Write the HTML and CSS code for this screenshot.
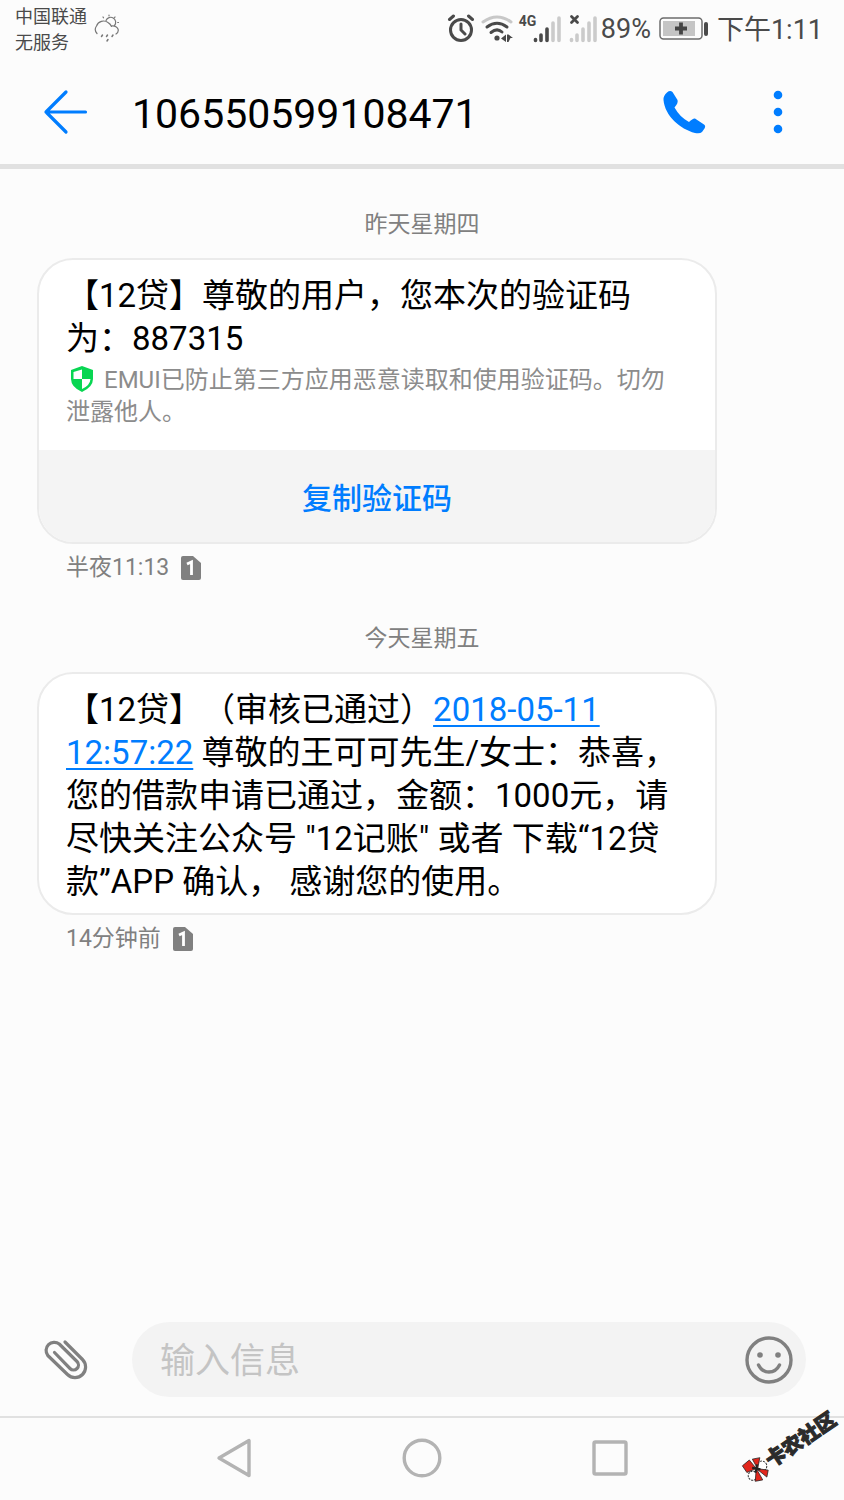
FILE: index.html
```html
<!DOCTYPE html>
<html lang="zh-CN">
<head>
<meta charset="utf-8">
<meta name="viewport" content="width=device-width, initial-scale=1">
<title>106550599108471</title>
<link rel="stylesheet" href="styles.css">
</head>
<body>
<div class="status">
  <div class="carrier"><span>中国联通</span><span>无服务</span></div>
  <svg class="weather" width="28" height="30" viewBox="0 0 28 30" fill="none" stroke="#777" stroke-width="1.200" stroke-linecap="round">
    <path d="M3 19.500A6 6 0 0 1 2.500 12A7.500 7.500 0 0 1 14 8.500Q16.500 10 17.500 12.500M17 12Q22 11 24 15Q25 18 22 20"/>
    <path d="M12 6.500A5 5 0 1 1 20.500 11.500"/>
    <path d="M9 3l.5 .8M15 1v.8M21 3l-.5 .8M24.500 8.500h-.8"/>
    <path d="M8.500 21l-1 1.500M13.500 21l-1 1.500M19 21l-1 1.500M14 25.500l-1 1.500" stroke-width="1.500"/>
  </svg>
  <div class="indicators">
    <svg width="28" height="30" viewBox="0 0 28 30" fill="none" stroke="#4a4a4a" stroke-width="3" stroke-linecap="round">
      <circle cx="14" cy="16" r="10.500"/><path d="M14 10v6l4 4M2.500 5.500l4-3.500M25.500 5.500l-4-3.500"/>
    </svg>
    <svg class="wifi" width="34" height="30" viewBox="0 0 34 30" fill="none" stroke="#4a4a4a" stroke-width="3" stroke-linecap="round">
      <path d="M3 8Q17-2 31 8" stroke="#c8c8c8"/><path d="M7 13Q17 5.500 27 13M11 18.500Q17 13.500 22 18"/>
      <g fill="#4a4a4a" stroke="none"><circle cx="17" cy="24" r="2.600"/><path d="M26 20.500v7.500l-5-3.500zM27 20.500h1.500l4.500 3.500h-2.500l-2 4H27z"/></g>
    </svg>
    <div class="signal">
      <span class="network">4G</span>
      <svg width="28" height="30" viewBox="0 0 28 30" fill="none" stroke="#4a4a4a" stroke-width="3.600" stroke-linecap="round">
        <path d="M2.500 25.500v1M8 21v5.500M14 15v11.500"/><path d="M20 9v17.500M26 4v22.500" stroke="#cbcbcb"/>
      </svg>
    </div>
    <svg class="nosim" width="28" height="30" viewBox="0 0 28 30" fill="none" stroke="#cbcbcb" stroke-width="3.600" stroke-linecap="round">
      <path d="M2.500 25.500v1M8 21v5.500M14 15v11.500M20 9v17.500M26 4v22.500"/><path d="M2.500 2.500l6 6M8.500 2.500l-6 6" stroke="#4a4a4a" stroke-width="2.800"/>
    </svg>
    <span class="percent">89%</span>
    <svg class="battery" width="50" height="24" viewBox="0 0 50 24">
      <rect x="1" y="1" width="42" height="21" rx="3.500" fill="none" stroke="#6c6c6c" stroke-width="1.500"/>
      <path d="M4 4h32v15H4z" fill="#c5c5c5"/><path d="M22 5.500v12M16 11.500h12" stroke="#444" stroke-width="3.800"/><rect x="45" y="5" width="4" height="14" rx="2" fill="#4a4a4a"/>
    </svg>
    <span class="clock">下午1:11</span>
  </div>
</div>
<header class="topbar">
  <button class="icon-button" aria-label="返回">
    <svg width="46" height="46" viewBox="0 0 46 46" fill="none" stroke="#007dff" stroke-width="3.200" stroke-linecap="round" stroke-linejoin="round"><path d="M23 3L3 23l20 20M3 23h39.500"/></svg>
  </button>
  <h1 class="title">106550599108471</h1>
  <button class="icon-button call" aria-label="呼叫">
    <svg width="44" height="44" viewBox="0 0 44 44" fill="#007dff"><path d="M4 2.500Q7 0 9.500 2L14.500 10Q15.500 13 11.500 17.500C15 24 20 28.500 26 32Q30 28 32 28.500L41 34.500Q43 36 41.500 38.500L39 42Q37 44 32 43C17 39 2 26 .5 10Q0 6 4 2.500Z"/></svg>
  </button>
  <button class="icon-button more" aria-label="更多">
    <svg width="10" height="46" viewBox="0 0 10 46" fill="#007dff"><circle cx="5" cy="6" r="4.300"/><circle cx="5" cy="23" r="4.300"/><circle cx="5" cy="40" r="4.300"/></svg>
  </button>
</header>
<main class="thread">
  <p class="day">昨天星期四</p>
  <article class="bubble">
    <div class="content">
      <p class="text">【12贷】尊敬的用户，您本次的验证码为：887315</p>
      <p class="notice"><svg class="shield" width="24" height="28" viewBox="0 0 24 28"><path d="M12 1L23 5V14Q23 22 12 27Q1 22 1 14V5Z" fill="#08d652"/><path d="M12 4.500V14H3.500V7ZM12 14h8.500Q20 20.500 12 24Z" fill="#fff"/></svg>EMUI已防止第三方应用恶意读取和使用验证码。切勿泄露他人。</p>
    </div>
    <button class="copy">复制验证码</button>
  </article>
  <p class="meta">半夜11:13<svg class="sim" width="20" height="24" viewBox="0 0 20 24"><path d="M2 0H12L20 7V22Q20 24 18 24H2Q0 24 0 22V2Q0 0 2 0Z" fill="#808080"/><path d="M6 8l4.500-2v13" fill="none" stroke="#fff" stroke-width="2.800"/></svg></p>
  <p class="day">今天星期五</p>
  <article class="bubble">
    <div class="content compact">
      <p class="text">【12贷】（审核已通过）<a href="#">2018-05-11 12:57:22</a> 尊敬的王可可先生/女士：恭喜，您的借款申请已通过，金额：1000元，请尽快关注公众号 "12记账" 或者 下载“12贷款”APP 确认， 感谢您的使用。</p>
    </div>
  </article>
  <p class="meta">14分钟前<svg class="sim" width="20" height="24" viewBox="0 0 20 24"><path d="M2 0H12L20 7V22Q20 24 18 24H2Q0 24 0 22V2Q0 0 2 0Z" fill="#808080"/><path d="M6 8l4.500-2v13" fill="none" stroke="#fff" stroke-width="2.800"/></svg></p>
</main>
<form class="composer">
  <button class="icon-button" type="button" aria-label="附件">
    <svg width="46" height="44" viewBox="0 0 46 44" fill="none" stroke="#808080" stroke-width="3.200" stroke-linecap="round" stroke-linejoin="round"><path d="M22 4L39.500 21.500A10.600 10.600 0 0 1 24.500 36.500L4.800 17.500A8.200 8.200 0 0 1 16.300 6L34 23.500A4.900 4.900 0 0 1 27 30.500L11.500 14.500"/></svg>
  </button>
  <div class="field">
    <input type="text" aria-label="输入信息" placeholder="输入信息">
    <button class="icon-button" type="button" aria-label="表情">
      <svg width="48" height="48" viewBox="0 0 48 48" fill="none" stroke="#808080" stroke-width="3.400" stroke-linecap="round"><circle cx="24" cy="24" r="22"/><path d="M13.500 29Q17 36 24 36T34.500 29"/><g fill="#808080" stroke="none"><circle cx="15" cy="19" r="2.800"/><circle cx="33" cy="19" r="2.800"/></g></svg>
    </button>
  </div>
</form>
<nav class="navbar">
  <button class="icon-button" aria-label="后退"><svg width="40" height="40" viewBox="0 0 40 40" fill="none" stroke="#b3b3b3" stroke-width="3.400" stroke-linejoin="round"><path d="M35 2.500v35L5 20Z"/></svg></button>
  <button class="icon-button" aria-label="主屏幕"><svg width="40" height="40" viewBox="0 0 40 40" fill="none" stroke="#b3b3b3" stroke-width="3.400"><circle cx="20" cy="20" r="17.800"/></svg></button>
  <button class="icon-button" aria-label="最近任务"><svg width="40" height="40" viewBox="0 0 40 40" fill="none" stroke="#b3b3b3" stroke-width="3.400"><rect x="4" y="4" width="32" height="32" rx="1.500"/></svg></button>
  <div class="watermark">
    <svg width="26" height="26" viewBox="0 0 26 26"><g fill="#fff" stroke="#333" stroke-width="1" stroke-dasharray="2 1"><circle cx="19" cy="13" r="5"/><circle cx="6" cy="16" r="4.500"/></g><g fill="#e1261c" stroke="#222" stroke-width=".7"><path d="M3 2L12 1L13 12L3 10Z"/><path d="M15 2L22 5L14 13Z"/><path d="M13 12L22 20L17 25Z"/><path d="M13 12L12 25L5 22Z"/></g><path d="M10 9L16 15M16 9L10 15" stroke="#222" stroke-width="2"/></svg>
    <span>卡农社区</span>
  </div>
</nav>
</body>
</html>
```
FILE: styles.css
```css
* { box-sizing: border-box; }
body {
  margin: 0;
  min-height: 100vh;
  display: flex;
  flex-direction: column;
  background: #fcfcfc;
  color: #000;
  font-family: Roboto, "Noto Sans CJK SC", sans-serif;
  text-spacing-trim: space-all;
}
h1, p { margin: 0; font-weight: 400; }
svg { display: block; flex: none; }
.icon-button { padding: 0; border: 0; background: none; flex: none; }

.status {
  display: flex;
  align-items: center;
  height: 57px;
  padding: 0 21px 0 15px;
  color: #4a4a4a;
}
.carrier { display: flex; flex-direction: column; padding-top: 2px; font-size: 18px; line-height: 26px; }
.weather { margin-left: 7px; }
.indicators { display: flex; align-items: center; margin-left: auto; font-size: 27px; line-height: 32px; white-space: nowrap; }
.wifi { margin-left: 5px; }
.signal { display: flex; margin-left: 5px; }
.network { font-size: 14px; font-weight: 700; line-height: 14px; width: 14px; }
.nosim { margin-left: 8px; }
.percent { margin-left: 4px; }
.battery { margin: 0 8px; }
.clock { padding-top: 2px; }

.topbar {
  display: flex;
  align-items: center;
  height: 112px;
  padding: 2px 61px 0 43px;
  border-bottom: 5px solid #e1e1e1;
}
.title { flex: 1; margin-left: 43px; padding-top: 4px; font-size: 41px; line-height: 48px; }
.more { margin-left: 66px; }

.thread { flex: 1; padding: 38px 0 24px; }
.day { padding-top: 3px; color: #808080; font-size: 23px; line-height: 30px; text-align: center; }
.bubble {
  margin: 18px 127px 0 37px;
  border: 2px solid #ebebeb;
  border-radius: 36px;
  background: #fff;
  overflow: hidden;
}
.content { padding: 14px 35px 22px 27px; }
.compact { padding-bottom: 10px; }
.text { font-size: 33px; line-height: 43px; }
.text a { color: #007dff; text-decoration-thickness: 2px; text-underline-offset: 4px; }
.notice { margin-top: 4px; color: #8c8c8c; font-size: 24px; line-height: 32px; }
.shield { display: inline-block; margin: 0 10px 0 4px; vertical-align: -5px; }
.copy {
  display: block;
  width: 100%;
  height: 92px;
  padding: 6px 0 0;
  border: 0;
  background: #f4f4f4;
  color: #007dff;
  font: 500 30px/40px Roboto, "Noto Sans CJK SC", sans-serif;
}
.meta {
  display: flex;
  align-items: center;
  gap: 12px;
  margin: 8px 66px 37px;
  color: #808080;
  font-size: 23px;
  line-height: 32px;
}

.composer { display: flex; align-items: center; gap: 43px; padding: 0 38px 19px 43px; }
.field {
  flex: 1;
  display: flex;
  align-items: center;
  min-width: 0;
  height: 75px;
  padding: 0 13px 0 28px;
  border-radius: 38px;
  background: #f3f3f3;
}
.field input {
  flex: 1;
  min-width: 0;
  padding: 5px 0 0;
  border: 0;
  outline: 0;
  background: none;
  font: 35px/48px Roboto, "Noto Sans CJK SC", sans-serif;
}
.field input::placeholder { color: #c4c4c4; opacity: 1; }

.navbar {
  position: relative;
  display: flex;
  align-items: center;
  justify-content: center;
  gap: 148px;
  height: 84px;
  padding-bottom: 2px;
  border-top: 2px solid #e1e1e1;
}
.watermark {
  position: absolute;
  right: 1px;
  top: 15px;
  display: flex;
  align-items: center;
  color: #2b2b2b;
  font-size: 20px;
  font-weight: 900;
  line-height: 28px;
  white-space: nowrap;
  -webkit-text-stroke: 1px #2b2b2b;
  transform: rotate(-34deg);
}
```
